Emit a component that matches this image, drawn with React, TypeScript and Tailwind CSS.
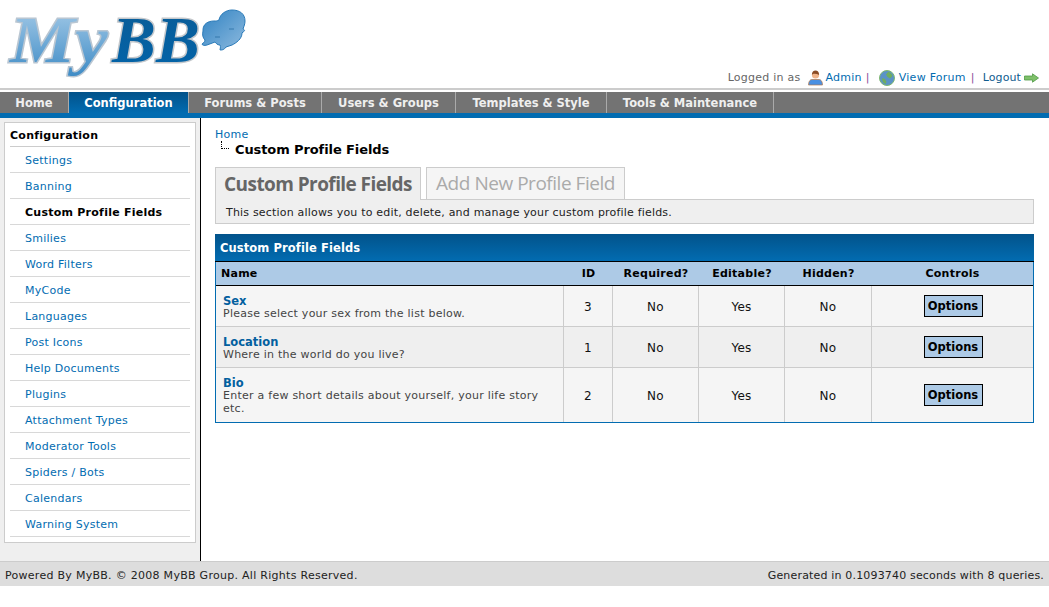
const navItems = [
  { label: 'Home', w: 'w-[68px]' },
  { label: 'Configuration', w: 'w-[119px]', active: true },
  { label: 'Forums & Posts', w: 'w-[132px]' },
  { label: 'Users & Groups', w: 'w-[133px]' },
  { label: 'Templates & Style', w: 'w-[150px]' },
  { label: 'Tools & Maintenance', w: 'w-[166px]' },
];

const sideItems = [
  'Settings',
  'Banning',
  'Custom Profile Fields',
  'Smilies',
  'Word Filters',
  'MyCode',
  'Languages',
  'Post Icons',
  'Help Documents',
  'Plugins',
  'Attachment Types',
  'Moderator Tools',
  'Spiders / Bots',
  'Calendars',
  'Warning System',
];

const rows = [
  { name: 'Sex', desc: 'Please select your sex from the list below.', id: 3, h: 'h-[41px]', bg: 'bg-[#f5f5f5]' },
  { name: 'Location', desc: 'Where in the world do you live?', id: 1, h: 'h-[41px]', bg: 'bg-[#efefef]' },
  { name: 'Bio', desc: 'Enter a few short details about yourself, your life story etc.', id: 2, h: 'h-[54px]', bg: 'bg-[#f5f5f5]' },
];

const Logo = () => (
  <svg width="250" height="84" viewBox="0 0 250 84" className="block">
    <defs>
      <linearGradient id="my" x1="0" y1="0" x2="0" y2="1">
        <stop offset="0" stopColor="#a9cde9" />
        <stop offset="1" stopColor="#3f8cc6" />
      </linearGradient>
      <linearGradient id="bb" x1="0" y1="0" x2="0" y2="1">
        <stop offset="0" stopColor="#0a5c96" />
        <stop offset="1" stopColor="#0264aa" />
      </linearGradient>
      <linearGradient id="bubble" x1="0" y1="0" x2="1" y2="1">
        <stop offset="0" stopColor="#2f82c2" />
        <stop offset="1" stopColor="#8fbbdf" />
      </linearGradient>
    </defs>
    <g fontFamily="'Liberation Serif', serif" fontWeight="700" fontStyle="italic" fontSize="66">
      <text x="10" y="62" fill="url(#my)" stroke="#b9c6d2" strokeWidth="3" paintOrder="stroke" textLength="98" lengthAdjust="spacingAndGlyphs">My</text>
      <text x="112" y="62" fill="url(#bb)" stroke="#c4c8cc" strokeWidth="3" paintOrder="stroke" textLength="88" lengthAdjust="spacingAndGlyphs">BB</text>
    </g>
    <path
      d="M203 30c0-6 5-9 11-9 2 0 3 0 5-1 1-6 7-10 13-10 8 0 13 4 13 11 0 3-1 5-2 8 2 1 2 2 0 3l-1 1c0 6-6 10-10 12l-6 2c-2 3-4 3-6 3 0-1 1-3 0-5-3 0-4-2-5-3l-8 3c-3 1-5 0-5-1 1-1 3-2 3-4-2-2-3-5-2-9z"
      fill="url(#bubble)"
      stroke="#2a7ab8"
      strokeWidth="1"
    />
    <path d="M229 29h5M215 37h5" stroke="#2a6fa5" strokeWidth="0.8" />
  </svg>
);

const UserIcon = () => (
  <svg width="15" height="16" viewBox="0 0 15 16" className="shrink-0">
    <path d="M0.500 15c0-3.500 1.500-5.500 3.500-5.500h7c2 0 3.500 2 3.500 5.500z" fill="#4a90e2" stroke="#b5794a" strokeWidth="0.7" />
    <circle cx="7.500" cy="5" r="3.600" fill="#f0b48a" />
    <path d="M3.900 5c0-3 1.600-4.400 3.600-4.400S11.100 2 11.100 5C9.500 4 7.500 3.600 5.500 3.800 4.700 4 4.300 4.500 3.900 5z" fill="#8a4b24" />
  </svg>
);

const GlobeIcon = () => (
  <svg width="16" height="16" viewBox="0 0 16 16" className="shrink-0">
    <circle cx="8" cy="8" r="7.500" fill="#5b93c7" stroke="#7fb870" strokeWidth="1" />
    <path d="M9 2c2 0 4 2 4.500 4L11 8.500 8.500 7 7 4.500zM3 8l3 1 1.500 3-1 2C4 13 3 11 3 8z" fill="#6fae5f" />
  </svg>
);

const ArrowIcon = () => (
  <svg width="15" height="10" viewBox="0 0 15 10" className="shrink-0 ml-[3px]">
    <path d="M0.500 3h8V0.800L14.500 5l-6 4.200V7h-8z" fill="#7fc06a" stroke="#4f9a45" strokeWidth="0.8" />
  </svg>
);

export default function App() {
  return (
    <div className="w-[1049px] h-[607px] overflow-hidden bg-white font-['DejaVu_Sans',sans-serif] text-[11px] tracking-[0.25px] text-black">
      {/* Header */}
      <div className="relative h-[88px]">
        <Logo />
        <div className="absolute right-[10px] top-[70px] flex items-center h-[16px] text-[#026cb1]">
          <span className="text-[#666] mr-[7px]">Logged in as</span>
          <UserIcon />
          <span className="ml-[3px]">Admin</span>
          <span className="text-[#8a4b9a] ml-[4px] mr-[9px]">|</span>
          <GlobeIcon />
          <span className="ml-[4px]">View Forum</span>
          <span className="text-[#8a4b9a] ml-[5px] mr-[8px]">|</span>
          <span className="text-[#0f5c8e] tracking-[0.1px]">Logout</span>
          <ArrowIcon />
        </div>
      </div>

      {/* Nav */}
      <div className="h-[30px] border-t-2 border-[#ccc]">
        <div className="mt-[2px] h-[21px] flex bg-[#737373] box-content border-b-[5px] border-[#026cb1]">
          {navItems.map((item) => (
            <div
              key={item.label}
              className={`${item.w} shrink-0 box-content h-[19px] pt-[2px] flex items-center justify-center border-r border-[#aaa] font-bold text-[11.5px] tracking-normal ${
                item.active ? 'bg-gradient-to-b from-[#02528a] to-[#026cb1] text-white' : 'text-[#efefef]'
              }`}
            >
              {item.label}
            </div>
          ))}
        </div>
      </div>

      <div className="flex h-[443px]">
        {/* Sidebar */}
        <div className="w-[201px] shrink-0 bg-[#efefef] border-r border-black pt-[4px] pl-[4px] h-full">
          <div className="w-[192px] h-[421px] bg-white border border-[#ccc] px-[5px]">
            <div className="h-[24px] border-b border-[#ccc] font-bold leading-[26px]">Configuration</div>
            {sideItems.map((s) => (
              <div
                key={s}
                className={`h-[26px] border-b border-[#d8d8d8] pl-[15px] leading-[27px] ${
                  s === 'Custom Profile Fields' ? 'font-bold text-black' : 'text-[#026cb1]'
                }`}
              >
                {s}
              </div>
            ))}
          </div>
        </div>

        {/* Main */}
        <div className="flex-1 pl-[14px] pr-[15px] pt-[10px]">
          <div className="text-[#026cb1] leading-[13px]">Home</div>
          <div className="relative pl-[20px] font-bold text-[13px] tracking-[-0.1px] leading-[17px] h-[17px]">
            <div className="absolute left-[6px] top-0 w-[8px] h-[8px] border-l border-b border-dotted border-black" />
            Custom Profile Fields
          </div>

          <div className="flex mt-[9px] items-end h-[32px]">
            <div className="w-[206px] h-[33px] -mb-[1px] relative z-10 bg-[#efefef] border border-[#ccc] border-b-0 flex items-center justify-center font-['Open_Sans',sans-serif] font-bold text-[19px] tracking-[-0.57px] text-[#666]">
              Custom Profile Fields
            </div>
            <div className="w-[199px] h-[32px] ml-[5px] pb-[1px] bg-[#f5f5f5] border border-[#ccc] border-b-0 flex items-center justify-center font-['Open_Sans',sans-serif] text-[19px] tracking-[-0.47px] text-[#aaa]">
              Add New Profile Field
            </div>
          </div>
          <div className="h-[25px] bg-[#efefef] border border-[#ccc] pl-[10px] leading-[26px] tracking-[0.19px] text-[#222]">
            This section allows you to edit, delete, and manage your custom profile fields.
          </div>

          <div className="mt-[10px] border border-t-0 border-[#026cb1]">
            <div className="h-[28px] -mx-[1px] bg-gradient-to-b from-[#02538b] to-[#026cb1] border-b border-black px-[5px] font-bold text-[11.5px] tracking-[0.1px] leading-[29px] text-white">
              Custom Profile Fields
            </div>
            <table className="w-full table-fixed border-separate border-spacing-0">
              <colgroup>
                <col className="w-[348px]" />
                <col className="w-[49px]" />
                <col className="w-[86px]" />
                <col className="w-[86px]" />
                <col className="w-[87px]" />
                <col />
              </colgroup>
              <thead>
                <tr className="h-[24px] bg-[#adcae6]">
                  <th className="text-left pl-[5px] pt-[2px] font-bold border-b border-black">Name</th>
                  <th className="pt-[2px] font-bold border-b border-black">ID</th>
                  <th className="pt-[2px] font-bold border-b border-black">Required?</th>
                  <th className="pt-[2px] font-bold border-b border-black">Editable?</th>
                  <th className="pt-[2px] font-bold border-b border-black">Hidden?</th>
                  <th className="pt-[2px] font-bold border-b border-black">Controls</th>
                </tr>
              </thead>
              <tbody>
                {rows.map((r, i) => (
                  <tr key={r.name} className={`${r.h} ${r.bg}`}>
                    <td className={`pl-[7px] pr-[8px] leading-[13px] border-r border-[#ccc] ${i < 2 ? 'border-b' : ''}`}>
                      <div className="font-bold text-[11.5px] tracking-normal h-[14px] leading-[16px] text-[#02609f]">{r.name}</div>
                      <div className="text-[#444]">{r.desc}</div>
                    </td>
                    {[String(r.id), 'No', 'Yes', 'No'].map((v, j) => (
                      <td
                        key={j}
                        className={`text-center pt-[1px] text-[12px] text-[#111] border-r border-[#ccc] ${i < 2 ? 'border-b' : ''}`}
                      >
                        {v}
                      </td>
                    ))}
                    <td className={`text-center pl-[1px] border-[#ccc] ${i < 2 ? 'border-b' : ''}`}>
                      <span className="inline-block w-[59px] h-[22px] bg-[#adcae6] border border-black font-bold text-[11.5px] tracking-normal leading-[21px] align-middle">
                        Options
                      </span>
                    </td>
                  </tr>
                ))}
              </tbody>
            </table>
          </div>
        </div>
      </div>

      {/* Footer */}
      <div className="h-[25px] pt-[5px] bg-[#ddd] border-t border-[#ccc] flex items-center justify-between px-[5px] text-[#222]">
        <span className="tracking-[0.28px]">Powered By MyBB. © 2008 MyBB Group. All Rights Reserved.</span>
        <span className="tracking-[0.17px]">Generated in 0.1093740 seconds with 8 queries.</span>
      </div>
    </div>
  );
}
